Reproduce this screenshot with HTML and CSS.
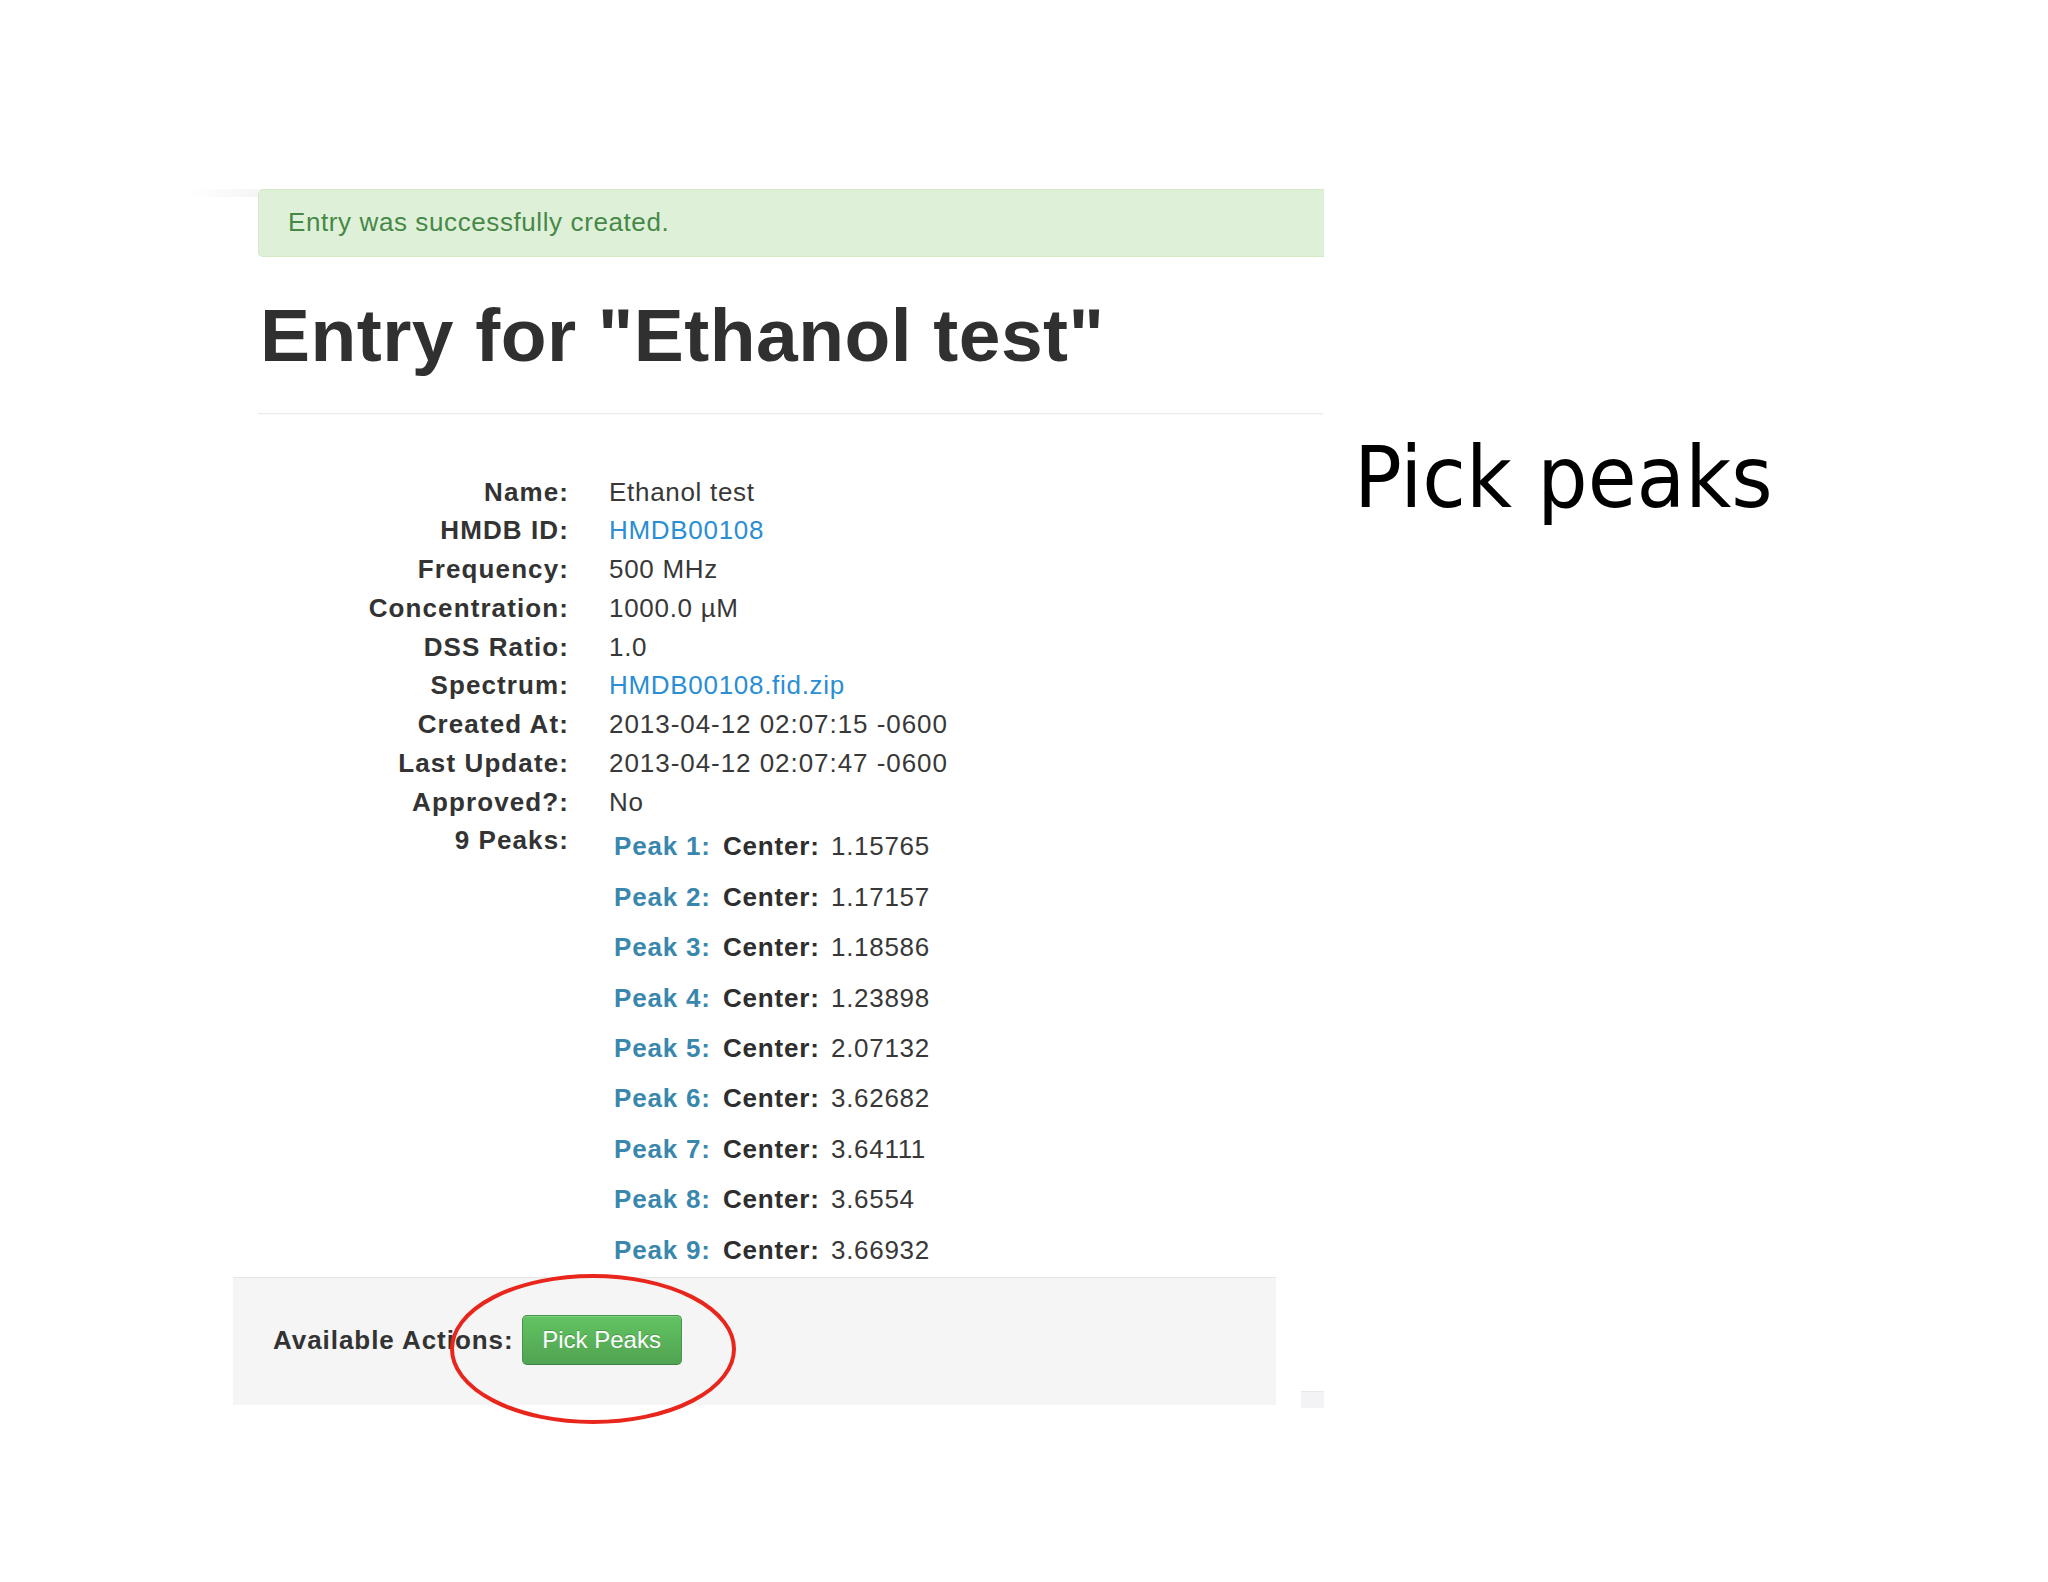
FILE: index.html
```html
<!DOCTYPE html>
<html lang="en">
<head>
<meta charset="utf-8">
<title>Entry for "Ethanol test"</title>
<link rel="stylesheet" href="styles.css">
</head>
<body>
<div class="slide">
  <div class="shot">
    <div class="alert">Entry was successfully created.</div>
    <h1 class="title">Entry for "Ethanol test"</h1>
    <div class="rule"></div>
    <dl class="details">
      <dt>Name:</dt><dd>Ethanol test</dd>
      <dt>HMDB ID:</dt><dd><a class="link" href="#">HMDB00108</a></dd>
      <dt>Frequency:</dt><dd>500 MHz</dd>
      <dt>Concentration:</dt><dd>1000.0 µM</dd>
      <dt>DSS Ratio:</dt><dd>1.0</dd>
      <dt>Spectrum:</dt><dd><a class="link" href="#">HMDB00108.fid.zip</a></dd>
      <dt>Created At:</dt><dd class="date">2013-04-12 02:07:15 -0600</dd>
      <dt>Last Update:</dt><dd class="date">2013-04-12 02:07:47 -0600</dd>
      <dt>Approved?:</dt><dd>No</dd>
      <dt>9 Peaks:</dt>
      <dd>
        <ul class="peaks">
          <li><span class="pk">Peak 1:</span><span class="ck">Center:</span><span class="cv">1.15765</span></li>
          <li><span class="pk">Peak 2:</span><span class="ck">Center:</span><span class="cv">1.17157</span></li>
          <li><span class="pk">Peak 3:</span><span class="ck">Center:</span><span class="cv">1.18586</span></li>
          <li><span class="pk">Peak 4:</span><span class="ck">Center:</span><span class="cv">1.23898</span></li>
          <li><span class="pk">Peak 5:</span><span class="ck">Center:</span><span class="cv">2.07132</span></li>
          <li><span class="pk">Peak 6:</span><span class="ck">Center:</span><span class="cv">3.62682</span></li>
          <li><span class="pk">Peak 7:</span><span class="ck">Center:</span><span class="cv">3.64111</span></li>
          <li><span class="pk">Peak 8:</span><span class="ck">Center:</span><span class="cv">3.6554</span></li>
          <li><span class="pk">Peak 9:</span><span class="ck">Center:</span><span class="cv">3.66932</span></li>
        </ul>
      </dd>
    </dl>
    <div class="actions-row">
      <div class="actions">
        <span class="act-label">Available Actions:</span>
        <button class="btn" type="button">Pick Peaks</button>
        <svg class="circle" width="286" height="150" viewBox="0 0 286 150" aria-hidden="true">
          <ellipse cx="143" cy="75" rx="141" ry="73" fill="none" stroke="#e8261c" stroke-width="4"/>
        </svg>
      </div>
      <div class="tab"></div>
    </div>
  </div>
  <div class="caption"><span class="caption-text">Pick peaks</span></div>
</div>
</body>
</html>
```
FILE: styles.css
```css
html, body {
  margin: 0;
  padding: 0;
  background: #ffffff;
}

body {
  font-family: "Liberation Sans", Arial, sans-serif;
  color: #333333;
}

.slide {
  display: flex;
  align-items: flex-start;
  box-sizing: border-box;
  min-height: 1582px;
  padding: 189px 0 0 258px;
}

.shot {
  width: 1066px;
  flex: none;
}

.alert {
  position: relative;
  background: #dff0d8;
  border: 1px solid #d6e9c6;
  border-right: none;
  border-radius: 5px 0 0 5px;
  color: #468847;
  font-size: 26px;
  letter-spacing: 0.6px;
  line-height: 36px;
  padding: 14px 0 16px 29px;
}

.alert::before {
  content: "";
  position: absolute;
  left: -71px;
  top: -1px;
  width: 70px;
  height: 8px;
  background: linear-gradient(to right, rgba(245, 245, 245, 0), #f5f5f5);
}

.title {
  margin: 38px 0 0;
  padding-left: 2px;
  font-size: 75px;
  line-height: 80px;
  font-weight: bold;
  letter-spacing: 0.45px;
  color: #303030;
}

.rule {
  margin-top: 38px;
  height: 1px;
  width: 1065px;
  background: #ebebeb;
  border-bottom: 1px solid #f8f8f8;
}

.details {
  display: grid;
  grid-template-columns: 311px 1fr;
  column-gap: 40px;
  align-items: start;
  margin: 57.6px 0 0;
  font-size: 26px;
  line-height: 38.75px;
}

.details dt {
  font-weight: bold;
  text-align: right;
  letter-spacing: 1.1px;
  color: #333333;
}

.details dd {
  margin: 0;
  letter-spacing: 0.7px;
  color: #383838;
}

.details dd.date {
  letter-spacing: 0.95px;
}

.link {
  color: #2a8ed4;
  text-decoration: none;
}

.peaks {
  list-style: none;
  margin: 0;
  padding: 0 0 0 5px;
  line-height: 50.4px;
}

.peaks li {
  white-space: nowrap;
}

.pk {
  display: inline-block;
  width: 109px;
  font-weight: bold;
  letter-spacing: 0.8px;
  color: #3a87ad;
}

.ck {
  display: inline-block;
  width: 108px;
  font-weight: bold;
  letter-spacing: 0.8px;
  color: #2e2e2e;
}

.cv {
  letter-spacing: 0.7px;
  color: #383838;
}

.actions-row {
  display: flex;
  margin: 2px 0 0 -25px;
}

.actions {
  position: relative;
  box-sizing: border-box;
  width: 1043px;
  height: 128px;
  background: #f5f5f6;
  border-top: 1px solid #e6e6e6;
  display: flex;
  align-items: center;
  gap: 8px;
  padding: 0 0 4px 40px;
}

.act-label {
  font-size: 26px;
  line-height: 30px;
  font-weight: bold;
  letter-spacing: 0.95px;
  color: #333333;
}

.btn {
  box-sizing: border-box;
  width: 160px;
  height: 50px;
  padding: 0;
  border: 1px solid #46944a;
  border-bottom-color: #3d833f;
  border-radius: 5px;
  background: linear-gradient(to bottom, #62c462, #51a351);
  color: #ffffff;
  font-family: "Liberation Sans", Arial, sans-serif;
  font-size: 24px;
  text-shadow: 0 -1px 0 rgba(0, 0, 0, 0.2);
  box-shadow: inset 0 1px 0 rgba(255, 255, 255, 0.2);
}

.circle {
  position: absolute;
  left: 217px;
  top: -4px;
  overflow: visible;
}

.tab {
  width: 23px;
  height: 16px;
  margin: 0 0 -3px 25px;
  align-self: flex-end;
  background: #f3f3f5;
  border-top: 1px solid #e8e8ea;
}

.caption {
  margin: 246px 0 0 30px;
  font-family: "DejaVu Sans", sans-serif;
  font-size: 85px;
  line-height: 85px;
  color: #000000;
  white-space: nowrap;
}

.caption-text {
  display: inline-block;
  transform: scaleX(0.935);
  transform-origin: left center;
}
```
